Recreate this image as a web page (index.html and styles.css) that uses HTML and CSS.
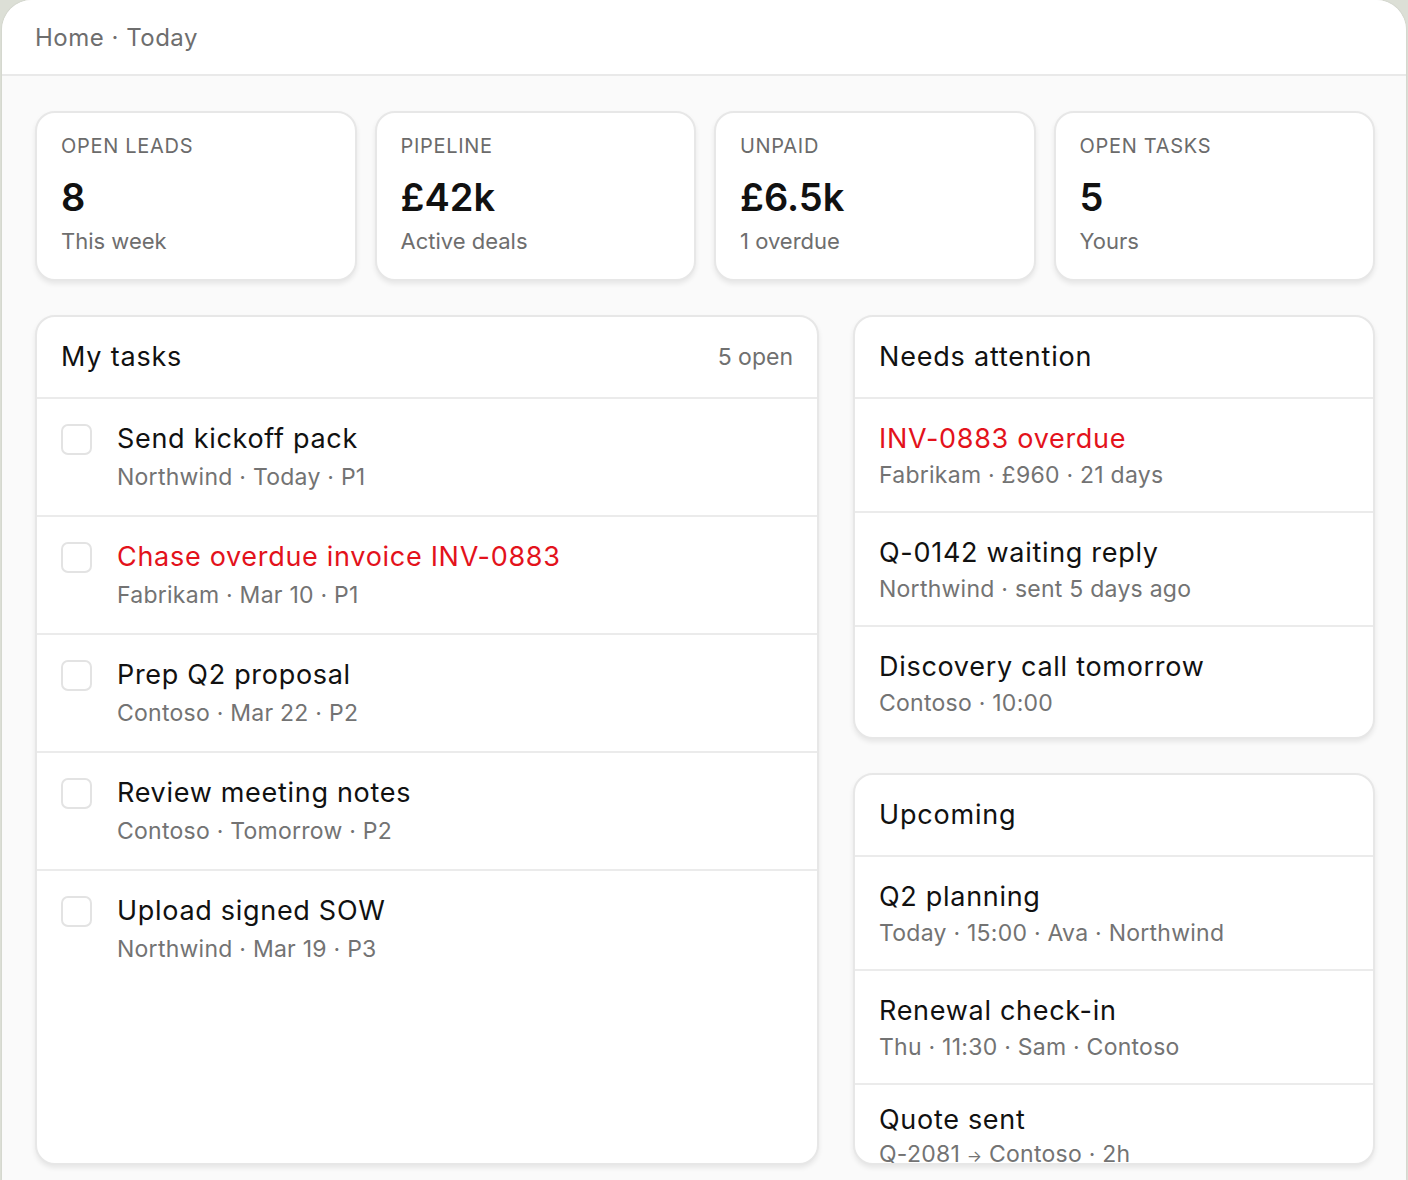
FILE: index.html
```html
<!DOCTYPE html>
<html lang="en">
  <head>
    <meta charset="UTF-8" />
    <meta name="viewport" content="width=device-width, initial-scale=1.0" />
    <title>Today</title>
    <link rel="stylesheet" href="styles.css">
  </head>
  <body>
    <div class="window">
      <header class="topbar">Home · Today</header>

      <main class="content">
        <section class="stats">
          <div class="stat">
            <p class="stat-label">Open leads</p>
            <p class="stat-value">8</p>
            <p class="stat-sub">This week</p>
          </div>
          <div class="stat">
            <p class="stat-label">Pipeline</p>
            <p class="stat-value">£42k</p>
            <p class="stat-sub">Active deals</p>
          </div>
          <div class="stat">
            <p class="stat-label">Unpaid</p>
            <p class="stat-value">£6.5k</p>
            <p class="stat-sub">1 overdue</p>
          </div>
          <div class="stat">
            <p class="stat-label">Open tasks</p>
            <p class="stat-value">5</p>
            <p class="stat-sub">Yours</p>
          </div>
        </section>

        <section class="board">
          <div class="card tasks">
            <div class="card-head">
              <h2>My tasks</h2>
              <span class="count">5 open</span>
            </div>
            <div class="task">
              <span class="check"></span>
              <div>
                <p class="title">Send kickoff pack</p>
                <p class="meta">Northwind · Today · P1</p>
              </div>
            </div>
            <div class="task">
              <span class="check"></span>
              <div>
                <p class="title danger">Chase overdue invoice INV-0883</p>
                <p class="meta">Fabrikam · Mar 10 · P1</p>
              </div>
            </div>
            <div class="task">
              <span class="check"></span>
              <div>
                <p class="title">Prep Q2 proposal</p>
                <p class="meta">Contoso · Mar 22 · P2</p>
              </div>
            </div>
            <div class="task">
              <span class="check"></span>
              <div>
                <p class="title">Review meeting notes</p>
                <p class="meta">Contoso · Tomorrow · P2</p>
              </div>
            </div>
            <div class="task">
              <span class="check"></span>
              <div>
                <p class="title">Upload signed SOW</p>
                <p class="meta">Northwind · Mar 19 · P3</p>
              </div>
            </div>
          </div>

          <div class="side">
            <div class="card">
              <div class="card-head">
                <h2>Needs attention</h2>
              </div>
              <div class="item">
                <p class="title danger">INV-0883 overdue</p>
                <p class="meta">Fabrikam · £960 · 21 days</p>
              </div>
              <div class="item">
                <p class="title">Q-0142 waiting reply</p>
                <p class="meta">Northwind · sent 5 days ago</p>
              </div>
              <div class="item">
                <p class="title">Discovery call tomorrow</p>
                <p class="meta">Contoso · 10:00</p>
              </div>
            </div>

            <div class="card upcoming">
              <div class="card-head">
                <h2>Upcoming</h2>
              </div>
              <div class="item">
                <p class="title">Q2 planning</p>
                <p class="meta">Today · 15:00 · Ava · Northwind</p>
              </div>
              <div class="item">
                <p class="title">Renewal check-in</p>
                <p class="meta">Thu · 11:30 · Sam · Contoso</p>
              </div>
              <div class="item">
                <p class="title">Quote sent</p>
                <p class="meta">Q-2081 <span class="arrow">→</span> Contoso · 2h</p>
              </div>
            </div>
          </div>
        </section>
      </main>
    </div>
  </body>
</html>
```

FILE: styles.css
```css
html, body{
  height: 100%;
}
body{
  margin: 0;
  overflow: hidden;
  background-color: #dcdfd6;
  font-family: Inter, "Noto Sans", Arial, sans-serif;
  color: #111;
}
p, h2{
  margin: 0;
}
.window{
  height: 100vh;
  margin: 0 2px;
  background-color: #fafafa;
  border-radius: 30px 30px 0 0;
  box-shadow: 0 0 2px rgba(0, 0, 0, 0.12);
  display: flex;
  flex-direction: column;
  overflow: hidden;
}
.topbar{
  height: 74px;
  flex-shrink: 0;
  display: flex;
  align-items: center;
  padding: 0 33px;
  background-color: #fff;
  border-bottom: 2px solid #e9e9e9;
  font-size: 24px;
  letter-spacing: 0.5px;
  color: #6e6e6e;
}
.content{
  flex: 1;
  min-height: 0;
  display: flex;
  flex-direction: column;
  gap: 34px;
  padding: 35px 31px 15px 33px;
}

/* stat cards */
.stats{
  display: grid;
  grid-template-columns: repeat(4, 1fr);
  gap: 18px;
}
.stat{
  background-color: #fff;
  border: 2px solid #e7e7e7;
  border-radius: 20px;
  box-shadow: 0 3px 5px rgba(0, 0, 0, 0.08);
  padding: 21px 24px 24px;
}
.stat-label{
  font-size: 20px;
  line-height: 24px;
  letter-spacing: 0.7px;
  text-transform: uppercase;
  color: #6b6b6b;
}
.stat-value{
  margin-top: 16px;
  font-size: 38px;
  line-height: 46px;
  font-weight: 600;
}
.stat-sub{
  margin-top: 7px;
  font-size: 22px;
  line-height: 28px;
  color: #6e6e6e;
}

/* lists */
.board{
  flex: 1;
  min-height: 0;
  display: grid;
  grid-template-columns: 784fr 522fr;
  gap: 34px;
}
.side{
  display: flex;
  flex-direction: column;
  gap: 34px;
  min-height: 0;
}
.card{
  background-color: #fff;
  border: 2px solid #e7e7e7;
  border-radius: 20px;
  box-shadow: 0 3px 5px rgba(0, 0, 0, 0.08);
  overflow: hidden;
}
.upcoming{
  flex: 1;
  min-height: 0;
}
.card-head{
  display: flex;
  justify-content: space-between;
  align-items: center;
  padding: 22px 24px;
}
.card-head h2{
  font-size: 27px;
  line-height: 36px;
  font-weight: 400;
  letter-spacing: 0.8px;
}
.count{
  font-size: 23px;
  color: #707070;
}
.task{
  display: flex;
  gap: 25px;
  padding: 22px 24px 22px;
  border-top: 2px solid #ebebeb;
}
.check{
  flex-shrink: 0;
  width: 27px;
  height: 27px;
  margin-top: 3px;
  border: 2px solid #e3e3e3;
  border-radius: 7px;
}
.item{
  padding: 22px 24px 20px;
  border-top: 2px solid #ebebeb;
}
.item:last-child{
  padding-bottom: 18px;
}
.upcoming .item:last-child{
  padding-top: 17px;
}
.upcoming .item:last-child .meta{
  margin-top: 0;
}
.title{
  font-size: 27px;
  line-height: 36px;
  font-weight: 400;
  letter-spacing: 0.7px;
}
.meta{
  margin-top: 2px;
  font-size: 23px;
  line-height: 32px;
  letter-spacing: 0.25px;
  color: #737373;
}
.task .meta{
  margin-top: 4px;
}
.danger{
  color: #e3121b;
}
.arrow{
  font-size: 16px;
}
```
